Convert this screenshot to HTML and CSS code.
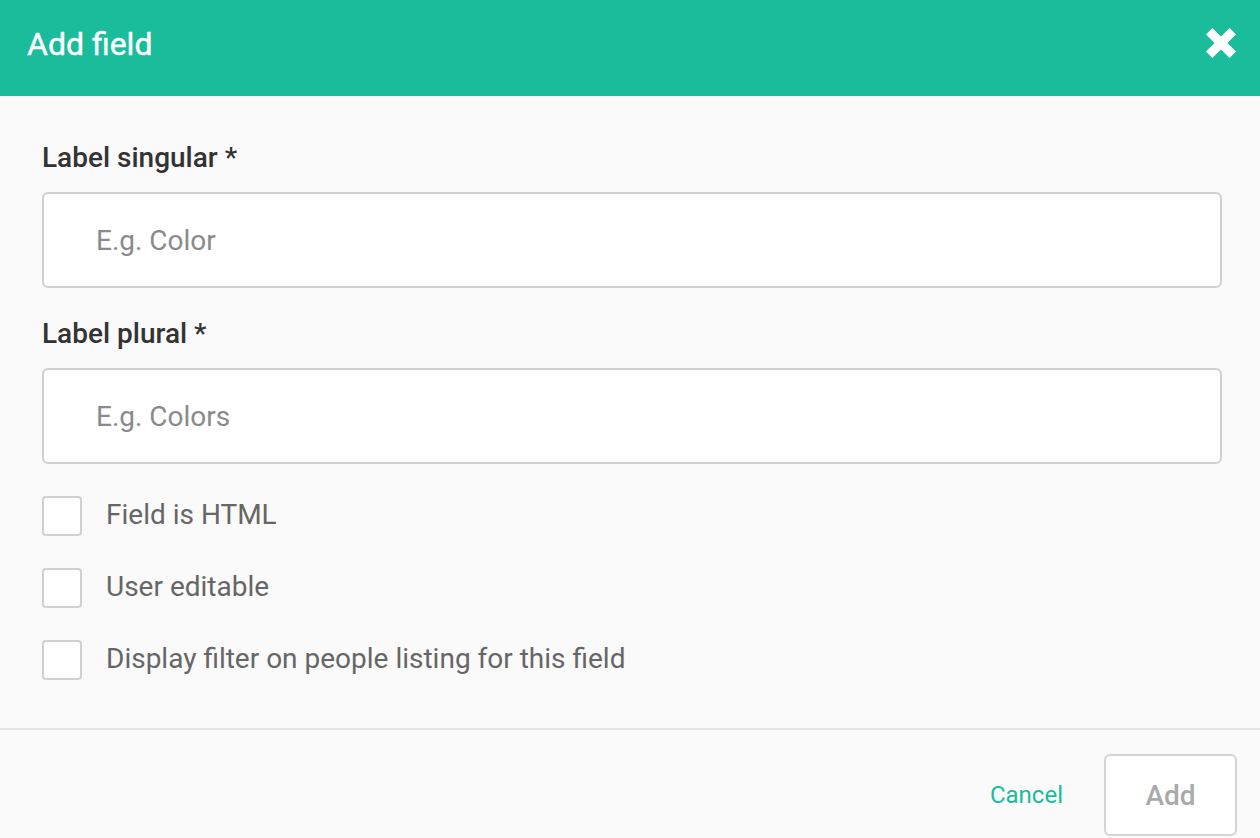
FILE: index.html
```html
<!DOCTYPE html>
<html lang="en">
<head>
<meta charset="utf-8">
<title>Add field</title>
<link rel="stylesheet" href="styles.css">
</head>
<body>
<div class="modal">
  <header class="modal-header">
    <h1 class="modal-title">Add field</h1>
    <button class="close-btn" aria-label="Close">
      <svg width="30" height="30" viewBox="0 0 30 30"><path d="M3.2 3.2 L26.8 26.8 M26.8 3.2 L3.2 26.8" stroke="#fff" stroke-width="9" fill="none"/></svg>
    </button>
  </header>
  <form class="modal-body">
    <div class="group first">
      <label class="field-label">Label singular *</label>
      <input class="text-input" type="text" placeholder="E.g. Color">
    </div>
    <div class="group">
      <label class="field-label">Label plural *</label>
      <input class="text-input" type="text" placeholder="E.g. Colors">
    </div>
    <div class="checks">
      <label class="check-row"><span class="box"></span><span class="check-text">Field is HTML</span></label>
      <label class="check-row"><span class="box"></span><span class="check-text">User editable</span></label>
      <label class="check-row"><span class="box"></span><span class="check-text">Display filter on people listing for this field</span></label>
    </div>
  </form>
  <footer class="modal-footer">
    <button class="cancel-btn" type="button">Cancel</button>
    <button class="add-btn" type="button">Add</button>
  </footer>
</div>
</body>
</html>
```
FILE: styles.css
```css
* { box-sizing: border-box; }
html, body { margin: 0; padding: 0; }
body {
  font-family: Roboto, "Liberation Sans", Arial, sans-serif;
  background: #fafafa;
  width: 1260px;
  height: 838px;
  overflow: hidden;
}
.modal { background: #fafafa; }
.modal-header {
  height: 96px;
  background: #1abc9c;
  display: flex;
  align-items: flex-start;
  justify-content: space-between;
  padding: 24px 24px 0 27px;
}
.modal-title {
  margin: 0;
  font-size: 32px;
  line-height: 40px;
  font-weight: 400;
  color: #fff;
  -webkit-text-stroke: 0.4px #fff;
}
.close-btn {
  margin-top: 4px;
  padding: 0;
  border: 0;
  background: none;
  width: 30px;
  height: 30px;
  display: block;
}
.close-btn svg { display: block; }
.modal-body {
  padding: 16px 38px 48px 42px;
  margin: 0;
}
.group { display: flex; flex-direction: column; }
.field-label {
  display: block;
  font-size: 28px;
  line-height: 30px;
  font-weight: 500;
  color: #333;
  margin: 31px 0 19px;
}
.text-input {
  height: 96px;
  width: 100%;
  border: 2px solid #d0d0d0;
  border-radius: 6px;
  background: #fff;
  padding: 0 20px 0 52px;
  font-family: inherit;
  font-size: 28px;
  color: #333;
  outline: none;
}
.text-input::placeholder { color: #8a8a8a; }
.checks {
  display: flex;
  flex-direction: column;
  gap: 32px;
  margin-top: 32px;
}
.check-row {
  display: flex;
  align-items: center;
  gap: 24px;
  height: 40px;
}
.box {
  width: 40px;
  height: 40px;
  flex: none;
  border: 2px solid #d0d0d0;
  border-radius: 4px;
  background: #fff;
}
.check-text {
  font-size: 28px;
  color: #666;
  margin-top: -4px;
}
.modal-footer {
  border-top: 2px solid #e4e4e4;
  display: flex;
  justify-content: flex-end;
  align-items: center;
  padding: 24px 23px 0 0;
  gap: 41px;
}
.cancel-btn {
  border: 0;
  background: none;
  padding: 0;
  font-family: inherit;
  font-size: 24px;
  color: #1abc9c;
}
.add-btn {
  width: 133px;
  height: 82px;
  border: 2px solid #d4d4d4;
  border-radius: 6px;
  background: #fff;
  font-family: inherit;
  font-size: 28px;
  font-weight: 500;
  color: #aaa;
  padding: 0;
}
```
